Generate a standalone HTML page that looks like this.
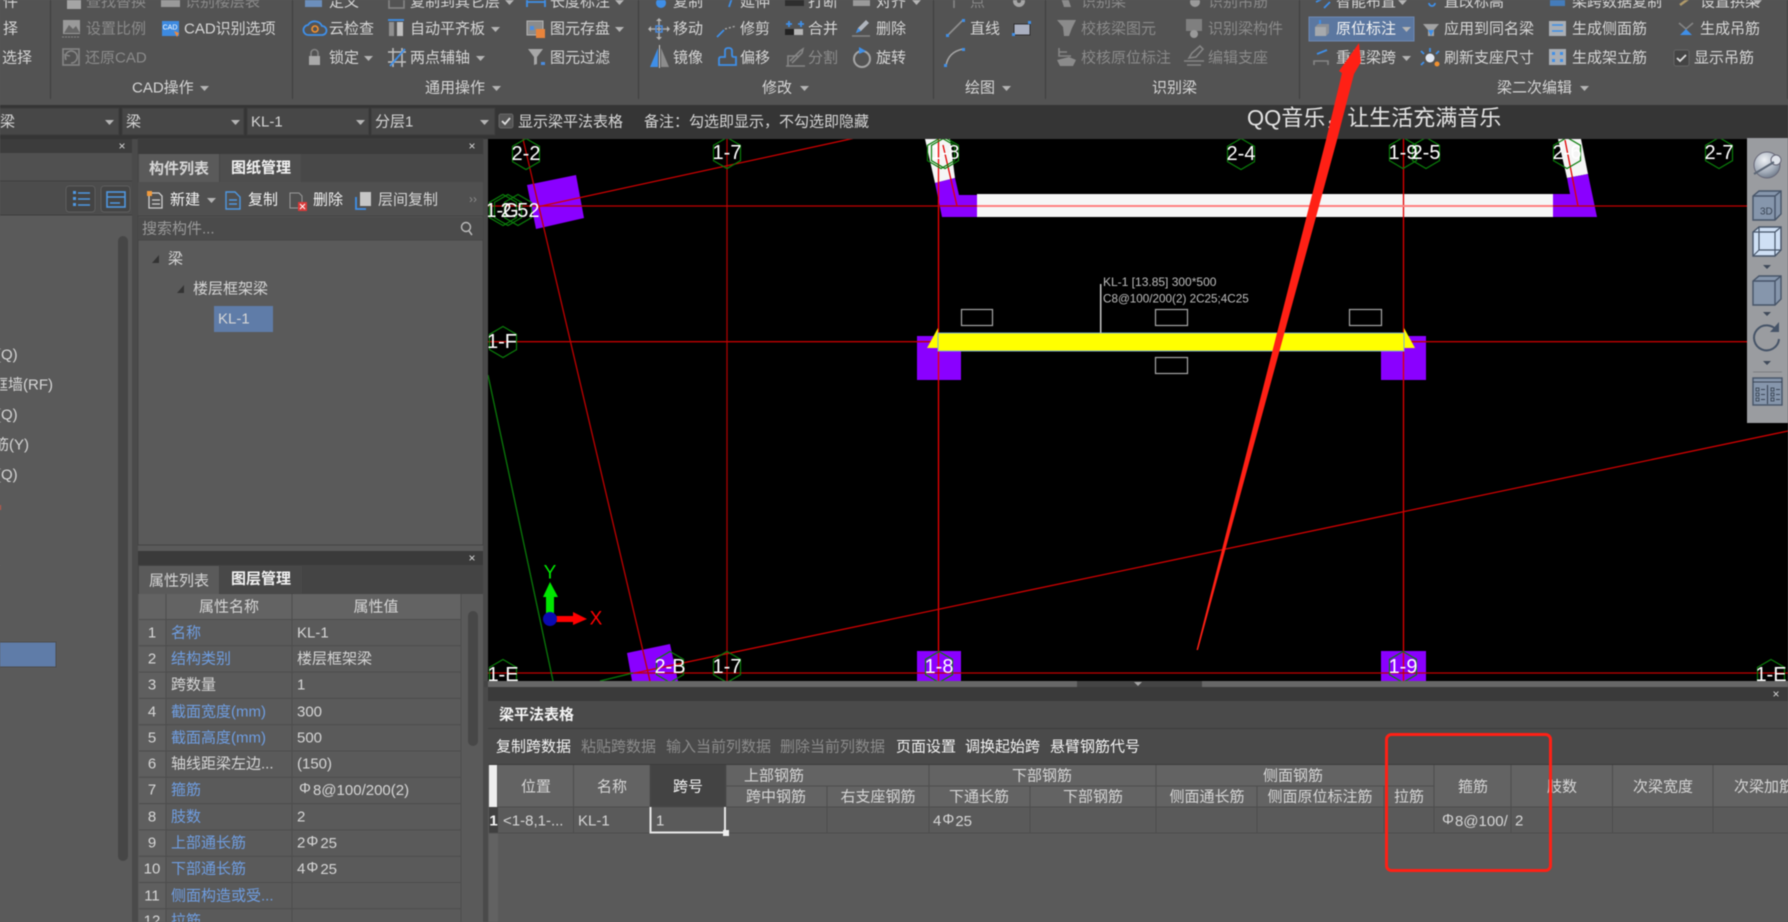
<!DOCTYPE html>
<html lang="zh-CN"><head><meta charset="utf-8"><title>梁平法表格</title>
<style>
html,body{margin:0;padding:0;background:#5a5a5a;width:1788px;height:922px;overflow:hidden}
svg{display:block;position:absolute;left:0;top:0;filter:blur(.4px)}
text{font-family:"Liberation Sans","Noto Sans CJK SC",sans-serif;font-size:15px;dominant-baseline:central;fill:#d6d6d6}
.g{fill:#8b8b8b}.w{fill:#f4f4f4}.b{fill:#6f9ee2}.m{text-anchor:middle}
.c text{font-size:20px;fill:#fff;text-anchor:middle}
.r{font-size:12px}
.a{fill:#b5b5b5}
.ln{stroke:#4d4d4d;stroke-width:1}
.hb{fill:#636363}
.i{fill:none;stroke:#aeb4bd;stroke-width:1.6}
.ib{fill:none;stroke:#3f8fe8;stroke-width:1.8}
.id{fill:none;stroke:#858585;stroke-width:1.6}
</style></head><body>
<svg width="1788" height="922" viewBox="0 0 1788 922" xmlns="http://www.w3.org/2000/svg">
<defs>
<polygon id="h" points="0,-15.5 13.5,-7.7 13.5,7.7 0,15.5 -13.5,7.7 -13.5,-7.7" fill="none" stroke="#0b7d0b" stroke-width="1.2"/>
<polygon id="v" points="0,0 9,0 4.5,5" fill="#b5b5b5"/>
<clipPath id="cv"><rect x="488" y="139" width="1300" height="542"/></clipPath>
<radialGradient id="sp" cx=".4" cy=".3" r=".8"><stop offset="0" stop-color="#eef1f5"/><stop offset=".6" stop-color="#a4adba"/><stop offset="1" stop-color="#5f6b7b"/></radialGradient>
</defs>

<!-- ribbon -->
<rect width="1788" height="105" fill="#535353"/>
<rect y="105" width="1788" height="34" fill="#353535"/>
<g fill="#3f3f3f"><rect x="50" width="1" height="99"/><rect x="292" width="1" height="99"/><rect x="638" width="1" height="99"/><rect x="933" width="1" height="99"/><rect x="1045" width="1" height="99"/><rect x="1299" width="1" height="99"/><rect x="1787" width="1" height="99"/></g>
<rect x="1309" y="17" width="105" height="24" fill="#5b77a0" stroke="#6d89b3"/>

<text x="3" y="2">件</text><text x="3" y="29">择</text><text x="2" y="58">选择</text>
<text x="86" y="2" class="g">查找替换</text><text x="185" y="2" class="g">识别楼层表</text>
<text x="86" y="29" class="g">设置比例</text><text x="184" y="29">CAD识别选项</text>
<text x="85" y="58" class="g">还原CAD</text>
<text x="132" y="88">CAD操作</text><use href="#v" x="200" y="86"/>

<text x="329" y="2">定义</text><text x="329" y="29">云检查</text><text x="329" y="58">锁定</text><use href="#v" x="364" y="56"/>
<text x="410" y="2">复制到其它层</text><use href="#v" x="505" y="0"/>
<text x="410" y="29">自动平齐板</text><use href="#v" x="491" y="27"/>
<text x="410" y="58">两点辅轴</text><use href="#v" x="476" y="56"/>
<text x="550" y="2">长度标注</text><use href="#v" x="615" y="0"/>
<text x="550" y="29">图元存盘</text><use href="#v" x="615" y="27"/>
<text x="550" y="58">图元过滤</text>
<text x="425" y="88">通用操作</text><use href="#v" x="492" y="86"/>

<text x="673" y="2">复制</text><text x="740" y="2">延伸</text><text x="808" y="2">打断</text><text x="876" y="2">对齐</text><use href="#v" x="912" y="0"/>
<text x="673" y="29">移动</text><text x="740" y="29">修剪</text><text x="808" y="29">合并</text><text x="876" y="29">删除</text>
<text x="673" y="58">镜像</text><text x="740" y="58">偏移</text><text x="808" y="58" class="g">分割</text><text x="876" y="58">旋转</text>
<text x="762" y="88">修改</text><use href="#v" x="800" y="86"/>

<text x="970" y="2" class="g">点</text><text x="970" y="29">直线</text>
<text x="965" y="88">绘图</text><use href="#v" x="1002" y="86"/>

<text x="1081" y="2" class="g">识别梁</text><text x="1081" y="29" class="g">校核梁图元</text><text x="1081" y="58" class="g">校核原位标注</text>
<text x="1208" y="2" class="g">识别吊筋</text><text x="1208" y="29" class="g">识别梁构件</text><text x="1208" y="58" class="g">编辑支座</text>
<text x="1152" y="88">识别梁</text>

<text x="1336" y="2">智能布置</text><use href="#v" x="1398" y="0"/>
<text x="1336" y="29" class="w">原位标注</text><use href="#v" x="1402" y="27"/>
<text x="1336" y="58">重提梁跨</text><use href="#v" x="1402" y="56"/>
<text x="1444" y="2">直改标高</text><text x="1444" y="29">应用到同名梁</text><text x="1444" y="58">刷新支座尺寸</text>
<text x="1572" y="2">梁跨数据复制</text><text x="1572" y="29">生成侧面筋</text><text x="1572" y="58">生成架立筋</text>
<text x="1700" y="2">设置拱梁</text><use href="#v" x="1753" y="0"/>
<text x="1700" y="29">生成吊筋</text><text x="1694" y="58">显示吊筋</text>
<text x="1497" y="88">梁二次编辑</text><use href="#v" x="1580" y="86"/>

<!-- ribbon icons -->
<rect x="67" y="-4" width="14" height="13" fill="#a5a5a5"/><rect x="161" y="-3" width="19" height="10" fill="#9a9a9a"/>
<rect x="63" y="20" width="17" height="14" fill="#9a9a9a"/><path d="M64 33l5-8 4 4 3-3 4 7z" fill="#666"/><path d="M62 37h18" stroke="#888" stroke-dasharray="2 1"/>
<rect x="162" y="21" width="17" height="15" fill="#3d8ae0"/><text x="170" y="28" class="m" style="font-size:7px;fill:#fff">CAD</text><path d="M174 31l5 2-2 4z" fill="#f08a3c"/>
<rect x="63" y="49" width="16" height="16" class="id"/><path d="M66 60a6 6 0 1 1 5 3M66 60l-1-5 5 1" class="id"/>
<rect x="305" y="-3" width="17" height="10" fill="#6c8fbc"/>
<path d="M309 35a5 5 0 0 1-1-10 8 8 0 0 1 14 1 4.500 4.500 0 0 1 0 9z" class="ib"/><circle cx="315" cy="29" r="3" fill="none" stroke="#f09030" stroke-width="1.6"/>
<rect x="309" y="56" width="11" height="9" fill="#a9a9a9"/><path d="M311 56v-3a3.500 3.500 0 0 1 7 0v3" class="id"/>
<rect x="389" y="-2" width="15" height="10" class="id"/>
<rect x="389" y="22" width="5" height="14" fill="#8f8f8f"/><rect x="397" y="22" width="6" height="14" fill="#bfbfbf"/><path d="M388 20h16" class="ib"/>
<path d="M393 48v19M402 48v19M388 52h18M388 62h18" stroke="#c0c0c0" stroke-width="1.5"/><path d="M390 66l15-17" class="ib"/>
<path d="M527 -2v9M545 -2v9M527 2h18" class="ib"/>
<rect x="527" y="21" width="16" height="14" fill="#8b8b8b" stroke="#b5b5b5"/><rect x="536" y="29" width="9" height="9" fill="#e8843c"/><rect x="530" y="26" width="4" height="4" fill="#4a8ce0"/>
<path d="M528 49h15l-6 8v7l-3 1v-8z" fill="#a7a7a7"/><rect x="541" y="62" width="4" height="3" fill="#4a8ce0"/>

<circle cx="661" cy="3" r="5" fill="#3f8fe8"/>
<path d="M729 7l3-9" class="ib"/><rect x="785" y="-3" width="19" height="9" fill="#2e2e2e"/><rect x="853" y="-3" width="17" height="9" fill="#9a9a9a"/>
<path d="M659 20v18M650 29h18" stroke="#a8a8a8" stroke-width="1.6"/><rect x="656" y="26" width="6" height="6" fill="none" stroke="#4a8ce0" stroke-width="1.5"/>
<path d="M659 18l-3 3h6zM659 40l-3-3h6zM648 29l3-3v6zM670 29l-3-3v6z" fill="#b5b5b5"/>
<path d="M717 37l7-7" class="ib"/><path d="M725 29l11-3" stroke="#aaa" stroke-dasharray="2 2" stroke-width="1.4"/>
<path d="M789 21v6M786 24h6M801 21v6M798 24h6" stroke="#3f8fe8" stroke-width="1.8"/><rect x="785" y="29" width="9" height="6" fill="#222"/><rect x="794" y="29" width="9" height="6" fill="#b5b5b5"/>
<path d="M852 36h18" class="id"/><path d="M856 33l2-5 8-8 3 3-8 8z" fill="#b0b5bd"/><path d="M856 33l2-5 3 3z" fill="#3f8fe8"/>
<path d="M658 48v19h-8z" fill="#3f8fe8"/><path d="M661 48v19h8z" fill="#8c8c8c"/><path d="M659.500 45v23" stroke="#ccc"/>
<path d="M719 65v-6q0-2 2-2h4v-6q0-3 3-3h1q3 0 3 3v4q0 2 2 2h2v8z" class="ib"/>
<path d="M786 66h19M788 66v-10h10M790 61l10-10 3-2-1 4-10 10" class="id"/>
<circle cx="862" cy="59" r="8" fill="none" stroke="#a5a5a5" stroke-width="2"/><path d="M859 47l7 4-7 3z" fill="#3f8fe8"/>
<path d="M954 8v-10" class="id"/><circle cx="1019" cy="1" r="6" fill="#a5a5a5"/><circle cx="1019" cy="1" r="2" fill="#555"/>
<path d="M947 36l16-16" stroke="#8f8f8f" stroke-width="1.6"/><rect x="946" y="34" width="3" height="3" fill="#3f8fe8"/><rect x="962" y="19" width="3" height="3" fill="#3f8fe8"/>
<rect x="1014" y="24" width="16" height="11" fill="#a9afc0" stroke="#2f2f2f"/><rect x="1028" y="21" width="3" height="3" fill="#3f8fe8"/><rect x="1012" y="33" width="3" height="3" fill="#3f8fe8"/>
<path d="M946 66q2-14 17-17" fill="none" stroke="#a5a5a5" stroke-width="1.6"/><rect x="944" y="64" width="3" height="3" fill="#3f8fe8"/><rect x="962" y="48" width="3" height="3" fill="#3f8fe8"/>
<path d="M1057 20h19l-4 8-3 8h-5l-1-9z" fill="#8b8b8b"/><path d="M1061 -2h7l3 9h-7z" fill="#8b8b8b"/>
<path d="M1059 48v8h12M1059 52h8" class="id"/><path d="M1057 60l12-3 7 3-3 6h-13z" fill="#8b8b8b"/>
<rect x="1186" y="19" width="16" height="12" fill="#7f7f7f"/><circle cx="1194" cy="34" r="4" fill="#9a9a9a"/><circle cx="1195" cy="2" r="5" fill="#9a9a9a"/>
<path d="M1184 61h20M1187 65h14M1189 58l3-5 8-7 3 3-7 8z" class="id"/>
<rect x="1315" y="27" width="11" height="9" fill="#a6a9ad"/><path d="M1315 27l3-3h11l-3 3zM1326 27l3-3v9l-3 3z" fill="#8c9097"/><rect x="1319" y="20" width="2" height="4" fill="#3f8fe8"/>
<path d="M1317 52l10-4" class="ib" transform="translate(0 2)"/><path d="M1314 65v-4h14v4" class="id"/>
<path d="M1316 2l8-4M1324 8l6-6" class="ib"/><path d="M1429 3a3 3 0 1 0 6 0" class="ib"/>
<path d="M1423 24h16l-5 6v6h-6v-6z" fill="#a3a3a3"/><path d="M1428 30h6l-3 6z" fill="#3f8fe8"/>
<circle cx="1430" cy="58" r="4.500" fill="#dfe6f2"/><path d="M1430 48v4M1424 54l-3-3M1436 54l3-3M1424 62l-3 3" class="ib"/><circle cx="1437" cy="64" r="2.500" fill="#f09030"/>
<rect x="1550" y="-3" width="15" height="9" fill="#3f8fe8" opacity=".7"/>
<rect x="1549" y="21" width="17" height="15" fill="#a9aeb5"/><path d="M1552 25h11M1552 31h11" stroke="#3f8fe8" stroke-width="1.5"/>
<rect x="1549" y="49" width="17" height="16" fill="#a9aeb5"/><g fill="#3f8fe8"><rect x="1552" y="52" width="3" height="3"/><rect x="1560" y="52" width="3" height="3"/><rect x="1552" y="59" width="3" height="3"/><rect x="1560" y="59" width="3" height="3"/></g>
<path d="M1680 5l11-8" stroke="#b09a6a" stroke-width="2.500"/>
<path d="M1679 23l7 6 7-6" class="id"/><path d="M1680 35l6-6 6 6z" fill="#3f8fe8"/>
<rect x="1674" y="50" width="15" height="16" rx="2" fill="#444" stroke="#666"/><path d="M1677 58l3 3 6-6" fill="none" stroke="#ddd" stroke-width="1.800"/>

<!-- toolbar row -->
<g fill="#474747" stroke="#3a3a3a"><rect x="-2" y="108" width="121" height="27"/><rect x="122" y="108" width="122" height="27"/><rect x="247" y="108" width="122" height="27"/><rect x="371" y="108" width="124" height="27"/></g>
<text x="0" y="122">梁</text><text x="126" y="122">梁</text><text x="251" y="122">KL-1</text><text x="375" y="122">分层1</text>
<use href="#v" x="105" y="120"/><use href="#v" x="231" y="120"/><use href="#v" x="356" y="120"/><use href="#v" x="480" y="120"/>
<rect x="499" y="114" width="14" height="14" rx="2" fill="#555" stroke="#666"/><path d="M502 121l3 3 5-6" fill="none" stroke="#ddd" stroke-width="1.800"/>
<text x="518" y="122">显示梁平法表格</text>
<text x="644" y="122">备注：勾选即显示，不勾选即隐藏</text>
<text x="1247" y="118" style="font-size:22px;fill:#e4e4e4">QQ音乐，让生活充满音乐</text>

<!-- left panel -->
<rect y="139" width="132" height="783" fill="#5a5a5a"/>
<rect y="139" width="132" height="14" fill="#3c3c3c"/>
<rect y="153" width="132" height="28" fill="#505050"/>
<rect y="181" width="132" height="34" fill="#4c4c4c"/><path d="M0 181h132M0 215h132" stroke="#3e3e3e"/>
<text x="122" y="146" class="m r">×</text>
<rect x="66" y="186" width="29" height="26" rx="3" fill="#444" stroke="#5e5e5e"/><rect x="101" y="186" width="29" height="26" rx="3" fill="#444" stroke="#5e5e5e"/>
<path d="M78 193h12M78 199h12M78 205h12" stroke="#4f97e0" stroke-width="1.6"/><rect x="73" y="191" width="3" height="3" fill="#4f97e0"/><rect x="73" y="197" width="3" height="3" fill="#4f97e0"/><rect x="73" y="203" width="3" height="3" fill="#4f97e0"/>
<rect x="107" y="192" width="18" height="15" fill="none" stroke="#4f97e0" stroke-width="1.600"/><path d="M107 197h18M110 203h10" stroke="#4f97e0" stroke-width="1.500"/>
<rect x="118" y="236" width="10" height="625" rx="5" fill="#464646"/>
<text x="-4" y="355">(Q)</text><text x="-7" y="385">框墙(RF)</text><text x="-4" y="415">(Q)</text><text x="-6" y="445">筋(Y)</text><text x="-4" y="475">(Q)</text>
<rect x="-1" y="505" width="2" height="5" fill="#c85a4a"/><text x="-4" y="565">)</text><text x="-5" y="686" style="fill:#d8985a">)</text>
<rect x="-1" y="642" width="57" height="25" fill="#5f7ca8" stroke="#4c4c4c"/>

<!-- splitters -->
<rect x="132" y="139" width="6" height="783" fill="#4a4a4a"/><rect x="483" y="139" width="5" height="783" fill="#4a4a4a"/>

<!-- component list panel -->
<rect x="138" y="139" width="345" height="406" fill="#5a5a5a" stroke="#444"/>
<rect x="138" y="139" width="345" height="15" fill="#3c3c3c"/>
<rect x="138" y="154" width="345" height="28" fill="#484848"/>
<text x="472" y="146" class="m r">×</text>
<rect x="139" y="154" width="80" height="28" fill="#5a5a5a"/><rect x="220" y="154" width="81" height="28" fill="#4e4e4e"/>
<text x="149" y="169" style="font-weight:700">构件列表</text><text x="231" y="168" class="w" style="font-weight:700">图纸管理</text>
<rect x="138" y="182" width="345" height="34" fill="#505050"/><path d="M138 216h345M138 240h345" stroke="#424242"/>
<rect x="138" y="217" width="345" height="23" fill="#4b4b4b"/>
<path d="M149 193h10l3 3v12h-13zM152 200h8M152 204h8" fill="none" stroke="#cfcfcf" stroke-width="1.300"/><rect x="147" y="191" width="5" height="5" fill="#f09a3c"/>
<text x="170" y="200" class="w">新建</text><use href="#v" x="207" y="198"/>
<path d="M226 192h9l5 5v12h-14zM229 200h8M229 204h8" fill="none" stroke="#4f97e0" stroke-width="1.400"/>
<text x="248" y="200" class="w">复制</text>
<path d="M290 193h9l3 3v12h-12z" fill="none" stroke="#999"/><rect x="298" y="202" width="9" height="9" fill="#d93a3a"/><path d="M300 204l5 5M305 204l-5 5" stroke="#fff"/>
<text x="313" y="200" class="w">删除</text>
<rect x="360" y="192" width="11" height="14" fill="#c6c6c6"/><path d="M356 197v12h10" class="ib"/>
<text x="378" y="200">层间复制</text><text x="473" y="199" class="m g r">››</text>
<text x="142" y="229" style="fill:#9a9a9a">搜索构件...</text>
<circle cx="466" cy="227" r="4.500" fill="none" stroke="#bbb" stroke-width="1.400"/><path d="M469 231l3 4" stroke="#bbb" stroke-width="1.500"/>
<path d="M159 255v8h-7z" fill="#333"/><text x="168" y="259">梁</text>
<path d="M184 285v8h-7z" fill="#333"/><text x="193" y="289">楼层框架梁</text>
<rect x="214" y="306" width="59" height="26" fill="#5f7ca8"/><text x="218" y="319">KL-1</text>

<!-- properties panel -->
<rect x="138" y="551" width="345" height="371" fill="#5a5a5a"/>
<rect x="138" y="551" width="345" height="14" fill="#3a3a3a"/>
<rect x="138" y="565" width="345" height="29" fill="#444"/>
<text x="472" y="558" class="m r">×</text>
<rect x="139" y="566" width="80" height="28" fill="#5a5a5a"/><rect x="220" y="566" width="82" height="27" fill="#484848"/>
<text x="149" y="581">属性列表</text><text x="231" y="579" class="w" style="font-weight:700">图层管理</text>
<rect x="139" y="594" width="322" height="25" class="hb"/>
<text x="229" y="607" class="m">属性名称</text><text x="376" y="607" class="m">属性值</text>
<rect x="139" y="619" width="27" height="303" fill="#5f5f5f"/>
<path class="ln" d="M166 594v328M292 594v328M461 594v328M139 619.500h322M139 645.800h322M139 672.100h322M139 698.400h322M139 724.700h322M139 751h322M139 777.300h322M139 803.600h322M139 829.900h322M139 856.200h322M139 882.500h322M139 908.800h322"/>
<rect x="468" y="611" width="10" height="135" rx="5" fill="#474747"/>
<text x="152" y="633" class="m">1</text><text x="152" y="659" class="m">2</text><text x="152" y="685" class="m">3</text><text x="152" y="712" class="m">4</text><text x="152" y="738" class="m">5</text><text x="152" y="764" class="m">6</text><text x="152" y="790" class="m">7</text><text x="152" y="817" class="m">8</text><text x="152" y="843" class="m">9</text><text x="152" y="869" class="m">10</text><text x="152" y="896" class="m">11</text><text x="152" y="921" class="m">12</text>
<text x="171" y="633" class="b">名称</text><text x="171" y="659" class="b">结构类别</text><text x="171" y="685">跨数量</text><text x="171" y="712" class="b">截面宽度(mm)</text><text x="171" y="738" class="b">截面高度(mm)</text><text x="171" y="764">轴线距梁左边...</text><text x="171" y="790" class="b">箍筋</text><text x="171" y="817" class="b">肢数</text><text x="171" y="843" class="b">上部通长筋</text><text x="171" y="869" class="b">下部通长筋</text><text x="171" y="896" class="b">侧面构造或受...</text><text x="171" y="921" class="b">拉筋</text>
<text x="297" y="633">KL-1</text><text x="297" y="659">楼层框架梁</text><text x="297" y="685">1</text><text x="297" y="712">300</text><text x="297" y="738">500</text><text x="297" y="764">(150)</text>
<text x="299" y="790"><tspan dy="-2">Φ</tspan><tspan dx="2" dy="2">8@100/200(2)</tspan></text><text x="297" y="817">2</text><text x="297" y="843">2<tspan dx="1" dy="-2">Φ</tspan><tspan dx="2" dy="2">25</tspan></text><text x="297" y="869">4<tspan dx="1" dy="-2">Φ</tspan><tspan dx="2" dy="2">25</tspan></text>

<!-- canvas -->
<rect x="488" y="139" width="1300" height="542" fill="#000"/>
<g clip-path="url(#cv)">
<polygon points="527,185 576,175 584,218 536,229" fill="#8a00ff"/>
<polygon points="925,139 950,139 955,178 935,183" fill="#f5f5f5"/>
<polygon points="935,183 955,178 959,195 977,195 977,217 942,217" fill="#8a00ff"/>
<rect x="977" y="194" width="576" height="23" fill="#f6f6f6"/>
<polygon points="1558,139 1581,139 1588,174 1567,178" fill="#f5f5f5"/>
<polygon points="1567,178 1588,174 1597,217 1553,217 1553,194 1570,194" fill="#8a00ff"/>
<rect x="917" y="336" width="44" height="44" fill="#8a00ff"/><rect x="1381" y="336" width="45" height="44" fill="#8a00ff"/>
<rect x="917" y="651" width="44" height="30" fill="#8a00ff"/><rect x="1381" y="651" width="45" height="30" fill="#8a00ff"/>
<polygon points="627,653 670,644 678,681 632,681" fill="#8a00ff"/>

<g stroke-width="1.300" fill="none">
<path d="M727 139V681" stroke="#a80000"/><path d="M938.500 139V681" stroke="#f00000"/><path d="M1403.500 139V681" stroke="#e00000"/>
<path d="M488 206H977" stroke="#c00000"/><path d="M977 206H1553" stroke="#ff8080" stroke-width="2"/><path d="M1553 206H1788" stroke="#c00000"/>
<path d="M488 341.700H1788" stroke="#c00000"/><path d="M488 673H1788" stroke="#c00000"/>
<path d="M523 139L650 681" stroke="#c00000"/>
<path d="M538 206.700L855 138" stroke="#d00000"/>
<path d="M635 673L1788 431" stroke="#d00000"/>
<path d="M943 145L957 206M1565 140L1578 206" stroke="#e00000"/>
<path d="M488 375L553 681M600 681L633 673" stroke="#0a7a0a"/>
</g>

<!-- beam -->
<polygon points="938,328 927,348 938,348" fill="#ff0"/><polygon points="1404,328 1415,348 1404,348" fill="#ff0"/>
<rect x="938" y="333" width="466" height="18" fill="#ff0" stroke="#7fb0c8"/>
<path d="M1100.700 284V333" stroke="#c8c8c8" stroke-width="1.500"/>
<g fill="none" stroke="#a8a8a8" stroke-width="1.200"><rect x="961.500" y="309.500" width="31" height="16"/><rect x="1155.500" y="309.500" width="32" height="16"/><rect x="1349.500" y="309.500" width="32" height="16"/><rect x="1155.500" y="357.500" width="32" height="16"/></g>
<text x="1103" y="282" style="font-size:12px;fill:#bdbdbd">KL-1 [13.85] 300*500</text>
<text x="1103" y="299" style="font-size:11.700px;fill:#bdbdbd">C8@100/200(2) 2C25;4C25</text>

<!-- hexes -->
<use href="#h" x="526" y="154"/><use href="#h" x="727" y="153"/><use href="#h" x="941" y="153"/><use href="#h" x="945" y="153"/><use href="#h" x="1241" y="154"/><use href="#h" x="1403" y="153"/><use href="#h" x="1426" y="153"/><use href="#h" x="1567" y="153"/><use href="#h" x="1719" y="153"/>
<use href="#h" x="503" y="210"/><use href="#h" x="508" y="210"/><use href="#h" x="518" y="210"/><use href="#h" x="503" y="342"/>
<use href="#h" x="503" y="675"/><use href="#h" x="670" y="667"/><use href="#h" x="727" y="667"/><use href="#h" x="939" y="667"/><use href="#h" x="1403" y="667"/><use href="#h" x="1771" y="675"/>
<g class="c">
<text x="526" y="154">2-2</text><text x="727" y="153">1-7</text><text x="945" y="153">1-8</text><text x="1241" y="154">2-4</text><text x="1403" y="153">1-9</text><text x="1426" y="153">2-5</text><text x="1567" y="153">2-6</text><text x="1719" y="153">2-7</text>
<text x="502" y="211">1-G</text><text x="520" y="211">2.52</text><text x="502" y="342">1-F</text>
<text x="503" y="675">1-E</text><text x="670" y="667">2-B</text><text x="727" y="667">1-7</text><text x="939" y="667">1-8</text><text x="1403" y="667">1-9</text><text x="1771" y="675">1-E</text>
</g>

<!-- axes -->
<rect x="546" y="597" width="8" height="22" fill="#00e600"/><polygon points="550,582 558,597 543,597" fill="#00e600"/>
<rect x="555" y="616" width="18" height="6" fill="#f00"/><polygon points="573,612 587,619 573,625" fill="#f00"/>
<circle cx="550" cy="619" r="7" fill="#0a0ab0"/>
<text x="550" y="573" class="m" style="font-size:19px;fill:#00e600">Y</text><text x="596" y="619" class="m" style="font-size:19px;fill:#f00">X</text>
</g>

<!-- right view toolbar -->
<rect x="1747" y="138" width="41" height="285" fill="#9a9ca0"/>
<circle cx="1767" cy="165" r="13" fill="url(#sp)" stroke="#667"/><circle cx="1776" cy="160" r="5" fill="#dfe3ea" stroke="#667"/><path d="M1754 174l20-12" stroke="#5b6676" stroke-width="2"/>
<g fill="#8696ac" stroke="#465468" stroke-width="1.400">
<path d="M1753 196l6-5h22v23l-6 6h-22z"/><path d="M1753 196h22v24M1775 196l6-5" fill="none"/>
<path d="M1753 281l6-5h22v23l-6 6h-22z"/><path d="M1753 281h22v24M1775 281l6-5" fill="none"/>
</g>
<text x="1760" y="212" style="font-size:10px;fill:#3b4656">3D</text>
<path d="M1753 232l6-5h22v23l-6 6h-22z" fill="#cfe0f5" stroke="#465468" stroke-width="1.400"/><path d="M1753 232h22v24M1775 232l6-5M1759 227v23h22M1759 250l-6 6" fill="none" stroke="#465468" stroke-width="1.200"/>
<path d="M1763 265h8l-4 4zM1763 312h8l-4 4zM1763 361h8l-4 4z" fill="#3f4a5a"/>
<path d="M1777 331a12.500 12.500 0 1 0 2 8" fill="none" stroke="#465468" stroke-width="2"/><path d="M1779 322v10h-9z" fill="#465468"/>
<path d="M1753 372h29" stroke="#7d7f83"/>
<rect x="1753" y="378" width="29" height="27" fill="#8696ac" stroke="#465468" stroke-width="1.400"/><path d="M1753 382h29M1767.500 385v19" stroke="#3b4656" stroke-width="1.100"/>
<g fill="none" stroke="#3b4656" stroke-width=".9"><rect x="1756" y="388" width="3" height="3"/><rect x="1756" y="393" width="3" height="3"/><rect x="1756" y="398" width="3" height="3"/><rect x="1771" y="388" width="3" height="3"/><rect x="1771" y="393" width="3" height="3"/><rect x="1771" y="398" width="3" height="3"/><path d="M1761 389.500h4M1761 394.500h4M1761 399.500h4M1776 389.500h4M1776 394.500h4M1776 399.500h4"/></g>

<!-- scrollbar -->
<rect x="484" y="681" width="1304" height="6" fill="#444"/><rect x="488" y="681" width="589" height="6" fill="#676767"/><rect x="1202" y="681" width="586" height="6" fill="#676767"/>
<path d="M1134 682h8l-4 4z" fill="#a5a5a5"/>

<!-- bottom panel -->
<rect x="488" y="687" width="1300" height="14" fill="#3a3a3a"/>
<text x="1776" y="694" class="m r">×</text>
<rect x="488" y="701" width="1300" height="64" fill="#4a4a4a"/><path d="M488 728.500h1300M488 764.500h1300" stroke="#3c3c3c"/>
<text x="499" y="715" class="w" style="font-weight:700">梁平法表格</text>
<text x="496" y="747" class="w">复制跨数据</text><text x="581" y="747" class="g">粘贴跨数据</text><text x="666" y="747" class="g">输入当前列数据</text><text x="780" y="747" class="g">删除当前列数据</text><text x="896" y="747" class="w">页面设置</text><text x="965" y="747" class="w">调换起始跨</text><text x="1050" y="747" class="w">悬臂钢筋代号</text>

<rect x="488" y="765" width="1300" height="157" fill="#5a5a5a"/>
<rect x="489" y="833" width="9" height="89" fill="#626262"/>
<rect x="498" y="765" width="1290" height="42" class="hb"/>
<rect x="489" y="765" width="8" height="42" fill="#ededed"/>
<rect x="650" y="765" width="76" height="42" fill="#434343"/>
<rect x="489" y="807" width="9" height="26" fill="#404040"/>
<path class="ln" d="M573.500 765v68M650 765v68M726 765v68M827 786v47M929 765v68M1030 786v47M1156 765v68M1257 786v47M1384 786v47M1434 765v68M1511 765v68M1612.500 765v68M1713 765v68M726 786h708M498 807h1290M489 833h1299"/>
<text x="536" y="787" class="m">位置</text><text x="612" y="787" class="m">名称</text><text x="688" y="787" class="m w">跨号</text>
<text x="744" y="776">上部钢筋</text><text x="1012" y="776">下部钢筋</text><text x="1263" y="776">侧面钢筋</text>
<text x="776" y="797" class="m">跨中钢筋</text><text x="878" y="797" class="m">右支座钢筋</text><text x="979" y="797" class="m">下通长筋</text><text x="1093" y="797" class="m">下部钢筋</text><text x="1207" y="797" class="m">侧面通长筋</text><text x="1320" y="797" class="m">侧面原位标注筋</text><text x="1409" y="797" class="m">拉筋</text>
<text x="1473" y="787" class="m">箍筋</text><text x="1562" y="787" class="m">肢数</text><text x="1663" y="787" class="m">次梁宽度</text><text x="1734" y="787">次梁加筋</text>
<text x="493.500" y="821" class="m w" style="font-weight:700">1</text><text x="503" y="821">&lt;1-8,1-...</text><text x="578" y="821">KL-1</text><text x="656" y="821">1</text>
<text x="933" y="821">4<tspan dx="1" dy="-2">Φ</tspan><tspan dx="1" dy="2">25</tspan></text><text x="1442" y="821"><tspan dy="-2">Φ</tspan><tspan dx="1" dy="2">8@100/</tspan></text><text x="1515" y="821">2</text>
<path d="M650.500 807v25.500h74.500V807" fill="none" stroke="#e8e8e8" stroke-width="2"/><rect x="723" y="830" width="6" height="6" fill="#eee"/>

<!-- annotations -->
<rect x="1386.500" y="734.500" width="164" height="136" rx="5" fill="none" stroke="#ff2015" stroke-width="3"/>
<polygon points="1196.500,650 1326,140 1342,73 1339,71 1359,43 1361,62 1354,74 1337,140 1198,650" fill="#ff2015"/>
</svg>
</body></html>
